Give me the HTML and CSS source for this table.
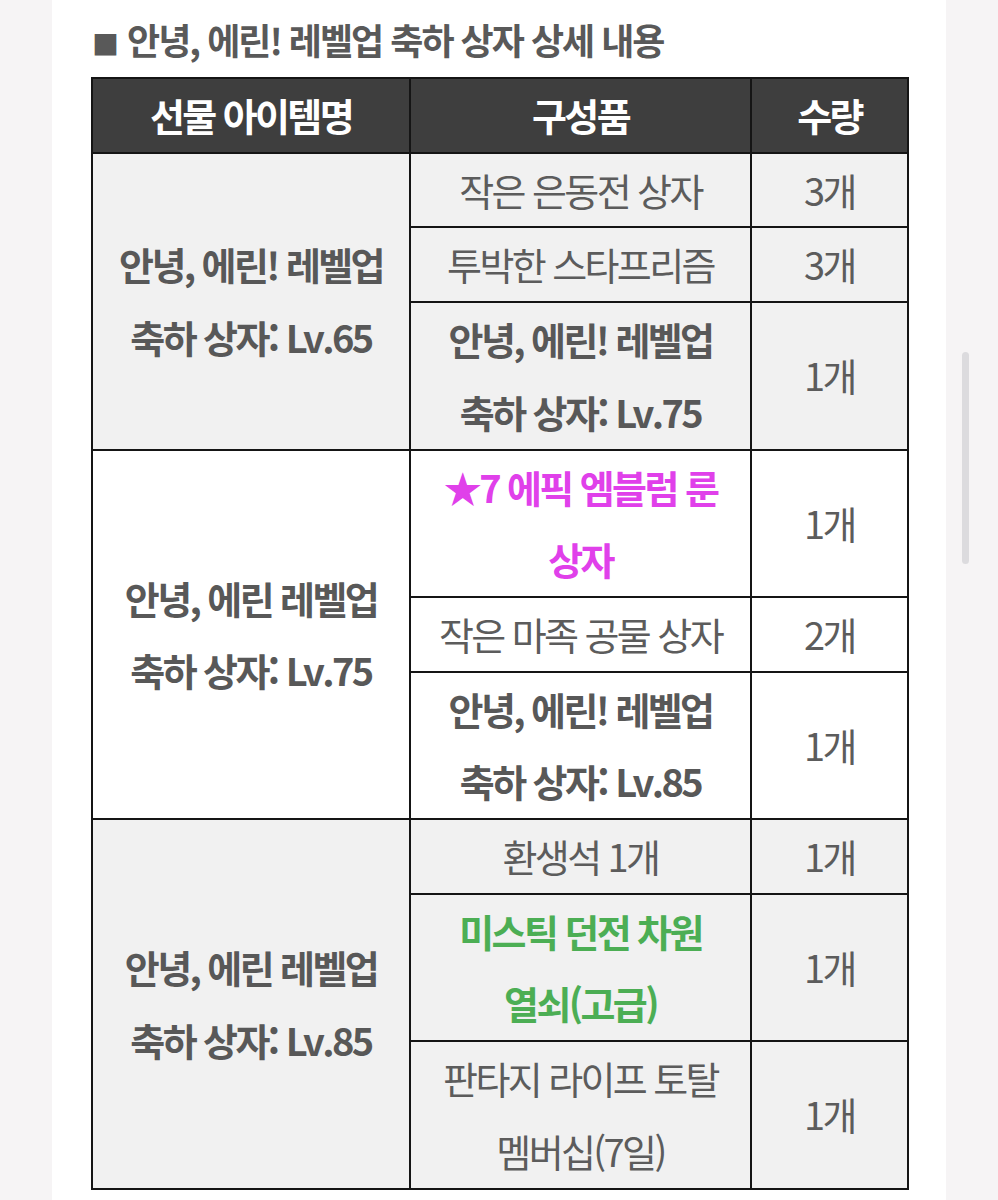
FILE: index.html
```html
<!DOCTYPE html>
<html lang="ko">
<head>
<meta charset="utf-8">
<link rel="stylesheet" href="styles.css">
</head>
<body>
<div class="page">
  <h2 class="title"><span class="sq">■</span> 안녕, 에린! 레벨업 축하 상자 상세 내용</h2>
  <table class="gift">
    <colgroup><col class="c1"><col class="c2"><col class="c3"></colgroup>
    <thead>
      <tr><th>선물 아이템명</th><th>구성품</th><th>수량</th></tr>
    </thead>
    <tbody class="grey">
      <tr><td rowspan="3" class="b">안녕, 에린! 레벨업<br>축하 상자: Lv.65</td><td>작은 은동전 상자</td><td>3개</td></tr>
      <tr><td>투박한 스타프리즘</td><td>3개</td></tr>
      <tr><td class="b">안녕, 에린! 레벨업<br>축하 상자: Lv.75</td><td>1개</td></tr>
    </tbody>
    <tbody class="white">
      <tr><td rowspan="3" class="b">안녕, 에린 레벨업<br>축하 상자: Lv.75</td><td class="b pink">★7 에픽 엠블럼 룬<br>상자</td><td>1개</td></tr>
      <tr><td>작은 마족 공물 상자</td><td>2개</td></tr>
      <tr><td class="b">안녕, 에린! 레벨업<br>축하 상자: Lv.85</td><td>1개</td></tr>
    </tbody>
    <tbody class="grey">
      <tr><td rowspan="3" class="b">안녕, 에린 레벨업<br>축하 상자: Lv.85</td><td>환생석 1개</td><td>1개</td></tr>
      <tr><td class="b green">미스틱 던전 차원<br>열쇠(고급)</td><td>1개</td></tr>
      <tr><td>판타지 라이프 토탈<br>멤버십(7일)</td><td>1개</td></tr>
    </tbody>
  </table>
</div>
<div class="scrollbar"></div>
</body>
</html>
```
FILE: styles.css
```css
html, body {
  margin: 0;
  padding: 0;
}
body {
  background: #f6f4f5;
  font-family: "Noto Sans CJK KR", "Noto Sans", sans-serif;
  color: #5b5b5b;
  height: 1200px;
  overflow: hidden;
}
.page {
  margin-left: 52px;
  width: 894px;
  height: 1200px;
  background: #ffffff;
  padding: 14px 0 0 39px;
  box-sizing: border-box;
}
.title {
  margin: 0 0 8px 0;
  font-size: 36px;
  line-height: 50px;
  font-weight: 700;
  letter-spacing: -2px;
  color: #595959;
  white-space: nowrap;
}
.title .sq {
  font-size: 27px;
  letter-spacing: 0;
  margin-left: 1px;
}
.gift {
  border-collapse: collapse;
  width: 816px;
  table-layout: fixed;
  border: 2px solid #111;
}
.c1 { width: 318px; }
.c2 { width: 341px; }
.c3 { width: 157px; }
.gift th, .gift td {
  border: 2px solid #151515;
  text-align: center;
  vertical-align: middle;
  padding: 0;
  font-size: 38px;
  line-height: 72.7px;
  letter-spacing: -2.6px;
  white-space: nowrap;
}
.gift th {
  background: #3e3e3e;
  color: #ffffff;
  font-weight: 700;
}
.gift td {
  font-weight: 400;
  color: #5c5c5c;
}
.grey td { background: #f1f1f1; }
.white td { background: #ffffff; }
.gift td.b {
  font-weight: 700;
  color: #585858;
}
.gift td.pink { color: #e040ea; }
.gift td.green { color: #4cae54; }
.scrollbar {
  position: absolute;
  left: 962px;
  top: 352px;
  width: 7px;
  height: 212px;
  border-radius: 4px;
  background: #dcdbde;
}
```
